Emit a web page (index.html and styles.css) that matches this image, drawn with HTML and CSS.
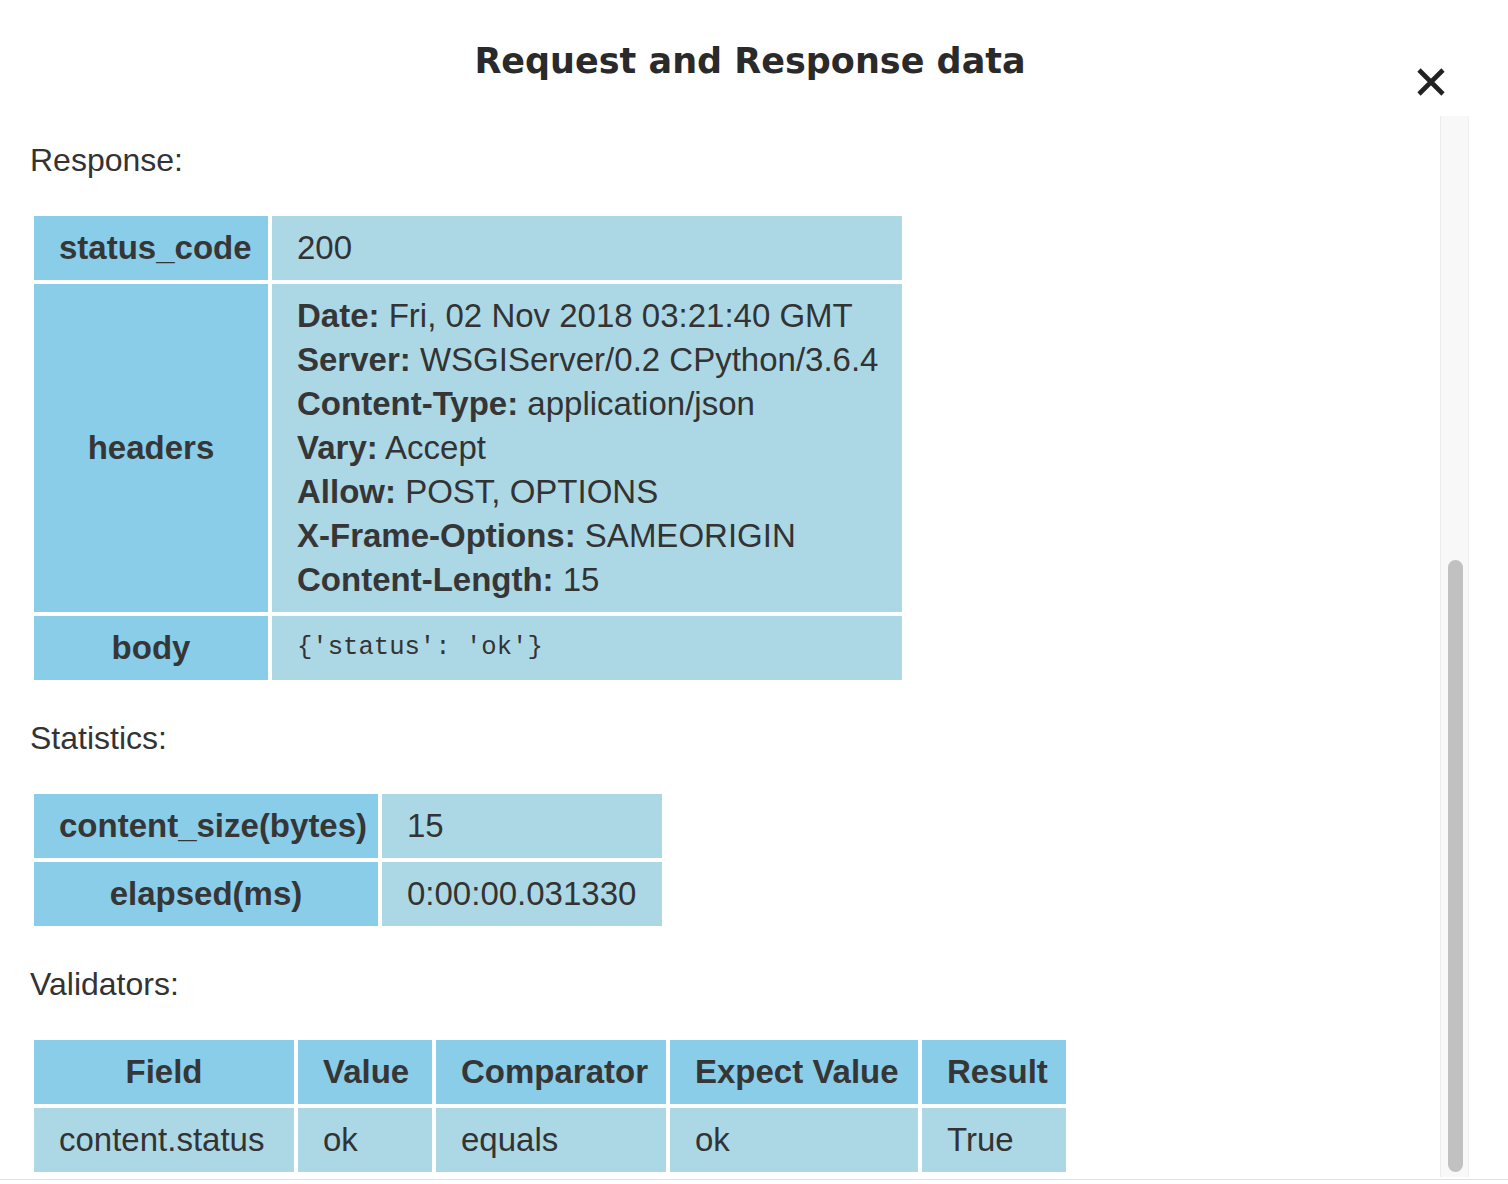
FILE: index.html
```html
<!DOCTYPE html>
<html lang="en">
<head>
<meta charset="utf-8">
<title>Request and Response data</title>
<link rel="stylesheet" href="styles.css">
</head>
<body>
<div class="modal">
  <header class="modal-head">
    <h2 class="modal-title">Request and Response data</h2>
    <button class="close-btn" type="button" aria-label="Close">
      <svg width="30" height="30" viewBox="0 0 30 30" aria-hidden="true">
        <path d="M3 3 L27 27 M27 3 L3 27" stroke="#222" stroke-width="4.6" fill="none"/>
      </svg>
    </button>
  </header>
  <div class="modal-body">
    <div class="content">
      <p class="section-label">Response:</p>
      <table class="data-table tbl-resp">
        <colgroup>
          <col class="c-resp-key">
          <col class="c-resp-val">
        </colgroup>
        <tr>
          <th>status_code</th>
          <td>200</td>
        </tr>
        <tr>
          <th>headers</th>
          <td>
            <div><b>Date:</b> Fri, 02 Nov 2018 03:21:40 GMT</div>
            <div><b>Server:</b> WSGIServer/0.2 CPython/3.6.4</div>
            <div><b>Content-Type:</b> application/json</div>
            <div><b>Vary:</b> Accept</div>
            <div><b>Allow:</b> POST, OPTIONS</div>
            <div><b>X-Frame-Options:</b> SAMEORIGIN</div>
            <div><b>Content-Length:</b> 15</div>
          </td>
        </tr>
        <tr>
          <th>body</th>
          <td><code class="mono">{'status': 'ok'}</code></td>
        </tr>
      </table>

      <p class="section-label">Statistics:</p>
      <table class="data-table tbl-stats">
        <colgroup>
          <col class="c-stat-key">
          <col class="c-stat-val">
        </colgroup>
        <tr>
          <th>content_size(bytes)</th>
          <td>15</td>
        </tr>
        <tr>
          <th>elapsed(ms)</th>
          <td>0:00:00.031330</td>
        </tr>
      </table>

      <p class="section-label">Validators:</p>
      <table class="data-table tbl-valid">
        <colgroup>
          <col class="c-field">
          <col class="c-value">
          <col class="c-comp">
          <col class="c-expect">
          <col class="c-result">
        </colgroup>
        <tr>
          <th>Field</th>
          <th>Value</th>
          <th>Comparator</th>
          <th>Expect Value</th>
          <th>Result</th>
        </tr>
        <tr>
          <td>content.status</td>
          <td>ok</td>
          <td>equals</td>
          <td>ok</td>
          <td>True</td>
        </tr>
      </table>
    </div>
    <div class="scrollbar">
      <div class="scroll-thumb"></div>
    </div>
  </div>
</div>
</body>
</html>
```

FILE: styles.css
```css
html, body {
  margin: 0;
  padding: 0;
  background: #ffffff;
}

body {
  font-family: "Liberation Sans", Arial, sans-serif;
  color: #333333;
}

.modal {
  width: 1508px;
  height: 1184px;
  overflow: hidden;
  background: #ffffff;
}

.modal-head {
  height: 116px;
  display: grid;
  grid-template-columns: 1fr auto 1fr;
  align-items: start;
}

.modal-title {
  grid-column: 2;
  margin: 41px 0 0 0;
  font-family: "DejaVu Sans", Verdana, sans-serif;
  font-weight: 700;
  font-size: 35px;
  line-height: 40px;
  color: #2a2a2a;
  transform: translateX(-4px);
}

.close-btn {
  grid-column: 3;
  justify-self: end;
  margin: 67px 62px 0 0;
  padding: 0;
  border: 0;
  background: transparent;
  width: 30px;
  height: 30px;
  display: flex;
  cursor: pointer;
}

.modal-body {
  height: 1063px;
  display: flex;
  border-bottom: 1px solid #e2e2e2;
}

.content {
  flex: 1;
  padding: 22px 0 0 30px;
  overflow: hidden;
}

.section-label {
  margin: 0 0 30px 0;
  font-size: 32px;
  line-height: 44px;
  color: #333333;
}

.data-table {
  table-layout: fixed;
  border-collapse: separate;
  border-spacing: 4px;
  margin: 0 0 32px 0;
  font-size: 33px;
  line-height: 44px;
  color: #333333;
}

.data-table th,
.data-table td {
  padding: 10px 25px;
  vertical-align: middle;
  white-space: nowrap;
  overflow: visible;
}

.data-table th {
  background: #89cde9;
  font-weight: 700;
  text-align: center;
  color: #363636;
}

.data-table td {
  background: #acd8e6;
  font-weight: 400;
  text-align: left;
}

.data-table td b {
  font-weight: 700;
  color: #363636;
}

.mono {
  display: block;
  font-family: "Liberation Mono", "Courier New", monospace;
  font-size: 25.6px;
  line-height: 44px;
  color: #333333;
}

.tbl-resp { width: 876px; }
.c-resp-key { width: 234px; }
.c-resp-val { width: 630px; }

.tbl-stats { width: 636px; }
.c-stat-key { width: 344px; }
.c-stat-val { width: 280px; }

.tbl-valid { width: 1040px; }
.c-field { width: 260px; }
.c-value { width: 134px; }
.c-comp { width: 230px; }
.c-expect { width: 248px; }
.c-result { width: 144px; }

.scrollbar {
  width: 27px;
  margin: 0 39px 2px 0;
  background: #f8f8f8;
  border-left: 1px solid #ececec;
  border-right: 1px solid #efefef;
  display: flex;
  flex-direction: column;
  justify-content: flex-end;
  align-items: center;
}

.scroll-thumb {
  width: 15px;
  height: 612px;
  margin: 0 0 5px 2px;
  background: #c1c1c1;
  border-radius: 8px;
}
```
